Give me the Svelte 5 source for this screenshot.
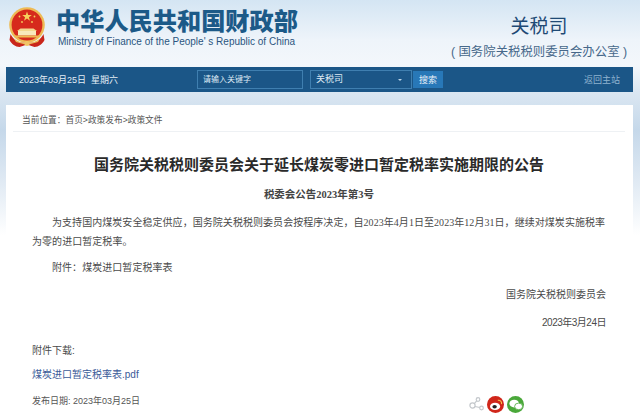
<script>
  const crumbs = ['首页', '政策发布', '政策文件'];
</script>

<div class="page">
  <header class="top">
    <div class="brand">
      <svg class="emblem" width="40" height="41" viewBox="0 0 40 41" aria-hidden="true">
        <circle cx="20" cy="18" r="17.8" fill="#eebb55" />
        <circle cx="20" cy="18" r="15.4" fill="#d62a1c" />
        <path d="M20 4.5l1.2 3.5h3.6l-2.9 2.2 1.1 3.5-3-2.2-3 2.2 1.1-3.5-2.9-2.2h3.6z" fill="#f6d15c" />
        <circle cx="12.5" cy="9.5" r=".9" fill="#f6d15c" />
        <circle cx="27.5" cy="9.5" r=".9" fill="#f6d15c" />
        <circle cx="15" cy="15" r=".9" fill="#f6d15c" />
        <circle cx="25" cy="15" r=".9" fill="#f6d15c" />
        <path d="M10 24l3.5-2.5h13L30 24z" fill="#f3d88f" />
        <rect x="11" y="24" width="18" height="4.5" fill="#f8e8bb" />
        <rect x="8" y="28.5" width="24" height="2" fill="#eebb55" />
        <path d="M3.5 27c2.5 5 6 7.5 9.5 8.5L20 36l7-.5c3.5-1 7-3.5 9.5-8.5l1 6c-2 4-6 7-10 7l-7.5-2.5L12.5 40c-4 0-8-3-10-7z" fill="#c9261b" />
        <path d="M7 31.5c3.5 3 8 4.500 13 4.500s9.500-1.500 13-4.500l-2 3.500-11 3-11-3z" fill="#eebb55" />
        <circle cx="20" cy="36.5" r="2.5" fill="#f1c566" />
      </svg>
      <div class="brand-text">
        <div class="cn-name">中华人民共和国财政部</div>
        <div class="en-name">Ministry of Finance of the People' s Republic of China</div>
      </div>
    </div>
    <div class="dept">
      <div class="dept-name">关税司</div>
      <div class="dept-sub">( 国务院关税税则委员会办公室 )</div>
    </div>
  </header>

  <nav class="bar">
    <span class="today">2023年03月25日&nbsp; 星期六</span>
    <div class="search">
      <div class="field keyword">请输入关键字</div>
      <div class="field scope">关税司<i class="caret"></i></div>
      <button type="button" class="go">搜索</button>
    </div>
    <a class="back" href="#top">返回主站</a>
  </nav>

  <main class="card">
    <div class="crumbs">
      当前位置：{#each crumbs as c, i}{#if i > 0}<span>&gt;</span>{/if}{c}{/each}
    </div>
    <article class="doc">
      <h1>国务院关税税则委员会关于延长煤炭零进口暂定税率实施期限的公告</h1>
      <div class="docno">税委会公告2023年第3号</div>
      <p class="para">为支持国内煤炭安全稳定供应，国务院关税税则委员会按程序决定，自2023年4月1日至2023年12月31日，继续对煤炭实施税率为零的进口暂定税率。</p>
      <p class="para attach">附件：煤炭进口暂定税率表</p>
      <div class="sign">国务院关税税则委员会</div>
      <div class="sign date">2023年3月24日</div>
      <div class="dl-label">附件下载:</div>
      <a class="dl" href="#top">煤炭进口暂定税率表.pdf</a>
      <div class="foot">
        <span class="pub">发布日期: 2023年03月25日</span>
        <div class="share">
          <svg width="15" height="15" viewBox="0 0 15 15" aria-hidden="true" fill="none" stroke="#c4c8cc" stroke-width="1.2">
            <circle cx="3.5" cy="8.5" r="2.6" />
            <circle cx="9" cy="2.5" r="1.8" />
            <circle cx="12.5" cy="11" r="1.8" />
            <path d="M5.3 6.6l2.4-2.8M6 9.5l4.8 1" />
          </svg>
          <span class="round weibo">
            <svg width="14" height="12" viewBox="0 0 15 13" aria-hidden="true">
              <ellipse cx="6.5" cy="8" rx="5.5" ry="4" fill="#fff" />
              <ellipse cx="6" cy="8.4" rx="2.4" ry="1.9" fill="#222" />
              <path d="M9.5 1.5c2.5-.5 4.5 1.5 4 4" fill="none" stroke="#f6c34a" stroke-width="1.2" />
            </svg>
          </span>
          <span class="round wechat">
            <svg width="14" height="12" viewBox="0 0 14 12" aria-hidden="true" fill="#fff">
              <ellipse cx="5.2" cy="4.6" rx="4.8" ry="3.9" />
              <ellipse cx="9.6" cy="7.4" rx="4" ry="3.3" stroke="#4aa83a" stroke-width=".8" />
            </svg>
          </span>
        </div>
      </div>
    </article>
  </main>
</div>

<style>
  :global(body) {
    margin: 0;
    background: #fff;
  }

  .page {
    width: 640px;
    height: 418px;
    overflow: hidden;
    font-family: "Liberation Sans", "Noto Sans CJK SC", sans-serif;
    color: #333;
    background: linear-gradient(180deg, #d4e5f3 0, #eef4fa 40px, #f3f7fb 65px, #dbe7f2 92px, #c5d8ea 130px, #dfe9f3 180px, #fff 235px);
  }

  .top {
    height: 67px;
    display: flex;
    justify-content: space-between;
  }

  .brand {
    display: flex;
    gap: 9px;
    padding: 7px 0 0 7px;
  }

  .cn-name {
    font-size: 24.2px;
    line-height: 30px;
    font-weight: 900;
    color: #1c5a88;
    white-space: nowrap;
  }

  .en-name {
    font-size: 10px;
    line-height: 14px;
    margin: -2px 0 0 2px;
    color: #2a5580;
    white-space: nowrap;
  }

  .dept {
    width: 178px;
    padding: 15px 12px 0 0;
    text-align: center;
  }

  .dept-name {
    font-size: 19px;
    line-height: 24px;
    color: #1f4a75;
  }

  .dept-sub {
    font-size: 12.4px;
    line-height: 18px;
    margin-top: 4px;
    color: #46688a;
    white-space: nowrap;
  }

  .bar {
    width: 627px;
    height: 25px;
    margin-left: 6px;
    display: flex;
    align-items: center;
    background: #1b5687;
    color: #e4eef6;
    font-size: 9px;
  }

  .today {
    width: 191px;
    padding-left: 13px;
    box-sizing: border-box;
  }

  .search {
    display: flex;
    gap: 7px;
    align-items: center;
  }

  .field {
    height: 17px;
    line-height: 17px;
    border: 1px solid #3f7fb0;
    padding-left: 5px;
    color: #dfeaf4;
  }

  .keyword {
    width: 99px;
    font-size: 8px;
  }

  .scope {
    width: 95px;
    margin-right: -6px;
    position: relative;
  }

  .caret {
    position: absolute;
    right: 9px;
    top: 8px;
    border: 2.5px solid transparent;
    border-top-color: #b9d2e6;
  }

  .go {
    width: 30px;
    height: 17px;
    padding: 0;
    border: 0;
    background: #2878b8;
    color: #e8f1f8;
    font: inherit;
  }

  .back {
    margin-left: auto;
    margin-right: 13px;
    color: #8fb3cf;
    text-decoration: none;
  }

  .card {
    width: 627px;
    margin: 13px 0 0 6px;
    height: 313px;
    background: #fff;
  }

  .crumbs {
    height: 26px;
    line-height: 30px;
    margin: 0 8px 0 7px;
    padding-left: 9px;
    font-size: 8.7px;
    color: #555;
    border-bottom: 1px solid #eef1f4;
  }

  .doc {
    padding: 0 27px 0 26px;
  }

  h1 {
    margin: 0;
    padding-top: 21px;
    font-size: 15px;
    line-height: 24px;
    font-weight: 700;
    text-align: center;
    color: #2a2a2a;
  }

  .docno {
    margin-top: 10px;
    font-family: "Liberation Serif", "Noto Sans CJK SC", serif;
    font-size: 10.5px;
    line-height: 16px;
    font-weight: 700;
    text-align: center;
    color: #444;
  }

  .para {
    margin: 10px 0 0;
    font-family: "Liberation Serif", "Noto Sans CJK SC", serif;
    font-size: 10px;
    line-height: 19px;
    letter-spacing: 0.05px;
    text-indent: 20px;
    color: #4a4a4a;
  }

  .attach {
    margin-top: 7px;
  }

  .sign {
    margin-top: 10px;
    font-size: 10px;
    line-height: 16px;
    text-align: right;
    color: #4a4a4a;
  }

  .date {
    margin-top: 12px;
    letter-spacing: -0.5px;
  }

  .dl-label {
    margin-top: 12px;
    font-size: 10px;
    line-height: 16px;
    color: #4a4a4a;
  }

  .dl {
    display: block;
    margin-top: 8px;
    font-size: 10px;
    line-height: 16px;
    color: #3a5a98;
    text-decoration: none;
  }

  .foot {
    display: flex;
    justify-content: space-between;
    align-items: flex-start;
    margin-top: 9px;
    font-size: 9px;
    line-height: 18px;
    color: #555;
  }

  .share {
    display: flex;
    gap: 3px;
    align-items: center;
    margin: 4px 82px 0 0;
  }

  .round {
    width: 17px;
    height: 17px;
    border-radius: 50%;
    display: flex;
    align-items: center;
    justify-content: center;
  }

  .weibo {
    background: #d0261a;
  }

  .wechat {
    background: #4aa83a;
  }
</style>
